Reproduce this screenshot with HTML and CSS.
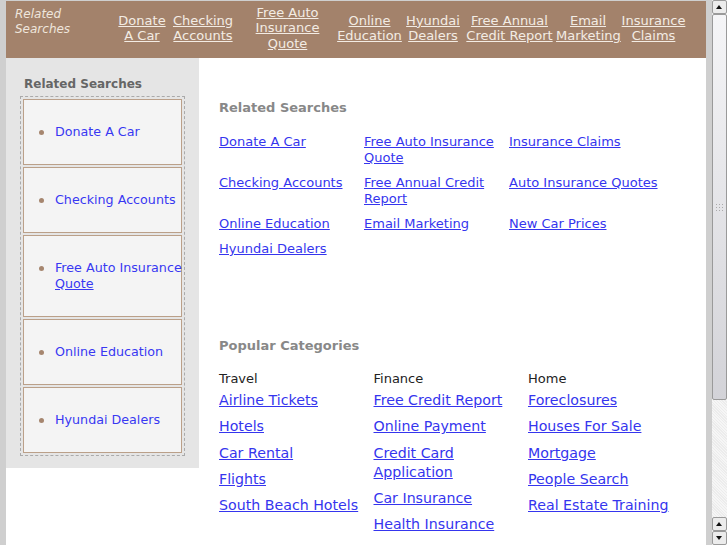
FILE: index.html
```html
<!DOCTYPE html>
<html lang="en">
  <head>
    <meta charset="UTF-8">
    <title>Related Searches</title>
    <link rel="stylesheet" href="styles.css">
  </head>
  <body>
    <div class="page">
      <div class="container">
        <!-- top bar -->
        <div class="topbar">
          <div class="topbar-label">Related<br>Searches</div>
          <div class="topnav">
            <a class="w50" href="#">Donate<br>A Car</a>
            <a class="w72" href="#">Checking<br>Accounts</a>
            <a class="w97" href="#">Free Auto<br>Insurance<br>Quote</a>
            <a class="w67" href="#">Online<br>Education</a>
            <a class="w60" href="#">Hyundai<br>Dealers</a>
            <a class="w93" href="#">Free Annual<br>Credit Report</a>
            <a class="w64" href="#">Email<br>Marketing</a>
            <a class="w67" href="#">Insurance<br>Claims</a>
          </div>
        </div>

        <div class="content">
          <!-- left column -->
          <div class="sidebar">
            <div class="side-title">Related Searches</div>
            <div class="side-list">
              <div class="side-item"><a href="#">Donate A Car</a></div>
              <div class="side-item"><a href="#">Checking Accounts</a></div>
              <div class="side-item"><a href="#"><span class="nowrap">Free Auto Insurance</span><br><span class="ul">Quote</span></a></div>
              <div class="side-item"><a href="#">Online Education</a></div>
              <div class="side-item"><a href="#">Hyundai Dealers</a></div>
            </div>
          </div>

          <!-- main column -->
          <div class="main">
            <div class="section-title">Related Searches</div>
            <div class="related-grid">
              <a href="#">Donate A Car</a>
              <a href="#">Free Auto Insurance Quote</a>
              <a href="#">Insurance Claims</a>
              <a href="#">Checking Accounts</a>
              <a href="#">Free Annual Credit Report</a>
              <a href="#">Auto Insurance Quotes</a>
              <a href="#">Online Education</a>
              <a href="#">Email Marketing</a>
              <a href="#">New Car Prices</a>
              <a href="#">Hyundai Dealers</a>
            </div>

            <div class="section-title popular">Popular Categories</div>
            <div class="categories">
              <div class="category">
                <div class="cat-title">Travel</div>
                <div class="cat-links">
                  <a href="#">Airline Tickets</a>
                  <a href="#">Hotels</a>
                  <a href="#">Car Rental</a>
                  <a href="#">Flights</a>
                  <a href="#">South Beach Hotels</a>
                </div>
              </div>
              <div class="category">
                <div class="cat-title">Finance</div>
                <div class="cat-links">
                  <a href="#">Free Credit Report</a>
                  <a href="#">Online Payment</a>
                  <a href="#">Credit Card<br>Application</a>
                  <a href="#">Car Insurance</a>
                  <a href="#">Health Insurance</a>
                </div>
              </div>
              <div class="category">
                <div class="cat-title">Home</div>
                <div class="cat-links">
                  <a href="#">Foreclosures</a>
                  <a href="#">Houses For Sale</a>
                  <a href="#">Mortgage</a>
                  <a href="#">People Search</a>
                  <a href="#">Real Estate Training</a>
                </div>
              </div>
            </div>
          </div>
        </div>
      </div>
    </div>

    <!-- window scrollbar -->
    <div class="scrollbar">
      <div class="sb-btn up"></div>
      <div class="sb-thumb"><div class="grip"></div></div>
      <div class="sb-track"></div>
      <div class="sb-btn up"></div>
      <div class="sb-btn down"></div>
    </div>
  </body>
</html>
```

FILE: styles.css
```css
body {
  margin: 0;
  height: 545px;
  overflow: hidden;
  display: flex;
  background: #cfcfcf;
  font-family: "DejaVu Sans", Verdana, sans-serif;
}

.page {
  width: 712px;
  padding: 1px 6px 0 6px;
  box-sizing: border-box;
}

.container {
  background: #fff;
  height: 544px;
}

/* top bar */
.topbar {
  height: 57px;
  background: #a3826b;
  display: flex;
  align-items: center;
}

.topbar-label {
  width: 111px;
  align-self: flex-start;
  box-sizing: border-box;
  padding: 6px 0 0 9px;
  font-size: 12px;
  line-height: 15px;
  font-style: italic;
  color: #efe6dd;
}

.topnav {
  display: flex;
  align-items: center;
  padding-bottom: 3px;
}

.topnav a {
  text-align: center;
  font-size: 13px;
  line-height: 15.5px;
  color: #f3ece4;
}

.w50 { width: 50px; }
.w60 { width: 60px; }
.w64 { width: 64px; }
.w67 { width: 67px; }
.w72 { width: 72px; }
.w93 { width: 93px; }
.w97 { width: 97px; }

/* columns */
.content {
  display: flex;
}

.sidebar {
  width: 193px;
  background: #e5e5e5;
  padding: 19px 14px 12px 14px;
  box-sizing: border-box;
  align-self: flex-start;
}

.side-title {
  font-size: 12px;
  font-weight: bold;
  line-height: 14px;
  color: #666;
  padding-left: 4px;
  margin-bottom: 5px;
}

.side-list {
  border: 1px dashed #aaa;
  padding: 2px;
  display: flex;
  flex-direction: column;
  gap: 2px;
}

.side-item {
  background: #f4f4f4;
  border: 1px solid #bba089;
  padding: 24px 0 24px 31px;
  position: relative;
  font-size: 12.7px;
  line-height: 16px;
}

.side-item::before {
  content: "";
  position: absolute;
  left: 15px;
  top: 30px;
  width: 5px;
  height: 5px;
  border-radius: 50%;
  background: #a6866f;
}

.side-item a {
  color: #3838f2;
  text-decoration: none;
}

.side-item .nowrap {
  white-space: nowrap;
}

.side-item .ul {
  text-decoration: underline;
}

.main {
  flex: 1;
  padding: 42px 0 0 20px;
}

.section-title {
  font-size: 13px;
  font-weight: bold;
  line-height: 16px;
  color: #888;
}

.related-grid {
  display: grid;
  grid-template-columns: 145px 145px auto;
  row-gap: 9px;
  margin-top: 18px;
  font-size: 13px;
  line-height: 16px;
}

.related-grid a, .cat-links a {
  color: #3535ee;
}

.section-title.popular {
  margin-top: 81px;
}

.categories {
  display: flex;
  margin-top: 17px;
}

.category {
  width: 154.5px;
}

.cat-title {
  font-size: 13px;
  line-height: 16px;
  color: #222;
}

.cat-links {
  display: flex;
  flex-direction: column;
  align-items: flex-start;
  gap: 7.3px;
  margin-top: 4px;
  font-size: 14.2px;
  line-height: 19px;
}

/* scrollbar */
.scrollbar {
  width: 15px;
  display: flex;
  flex-direction: column;
  background: #f3f3f3;
}

.sb-btn {
  height: 14px;
  box-sizing: border-box;
  border: 1px solid #9a9a9a;
  border-radius: 2px;
  background: #ececec;
  position: relative;
}

.sb-btn::after {
  content: "";
  position: absolute;
  left: 3px;
  top: 4px;
  border-left: 3.5px solid transparent;
  border-right: 3.5px solid transparent;
}

.sb-btn.up::after {
  border-bottom: 4px solid #111;
}

.sb-btn.down::after {
  border-top: 4px solid #111;
}

.sb-thumb {
  height: 386px;
  box-sizing: border-box;
  border: 1px solid #9a9a9a;
  border-radius: 2px;
  background: linear-gradient(#f5f5f7, #d3d3d8);
  display: flex;
  align-items: center;
  justify-content: center;
}

.grip {
  width: 9px;
  height: 8px;
  background-image: radial-gradient(#aaa 0.8px, transparent 1px);
  background-size: 3px 3px;
}

.sb-track {
  flex: 1;
  background: repeating-linear-gradient(45deg, #f6f6f6 0 1px, #ececec 1px 2px);
}
```
